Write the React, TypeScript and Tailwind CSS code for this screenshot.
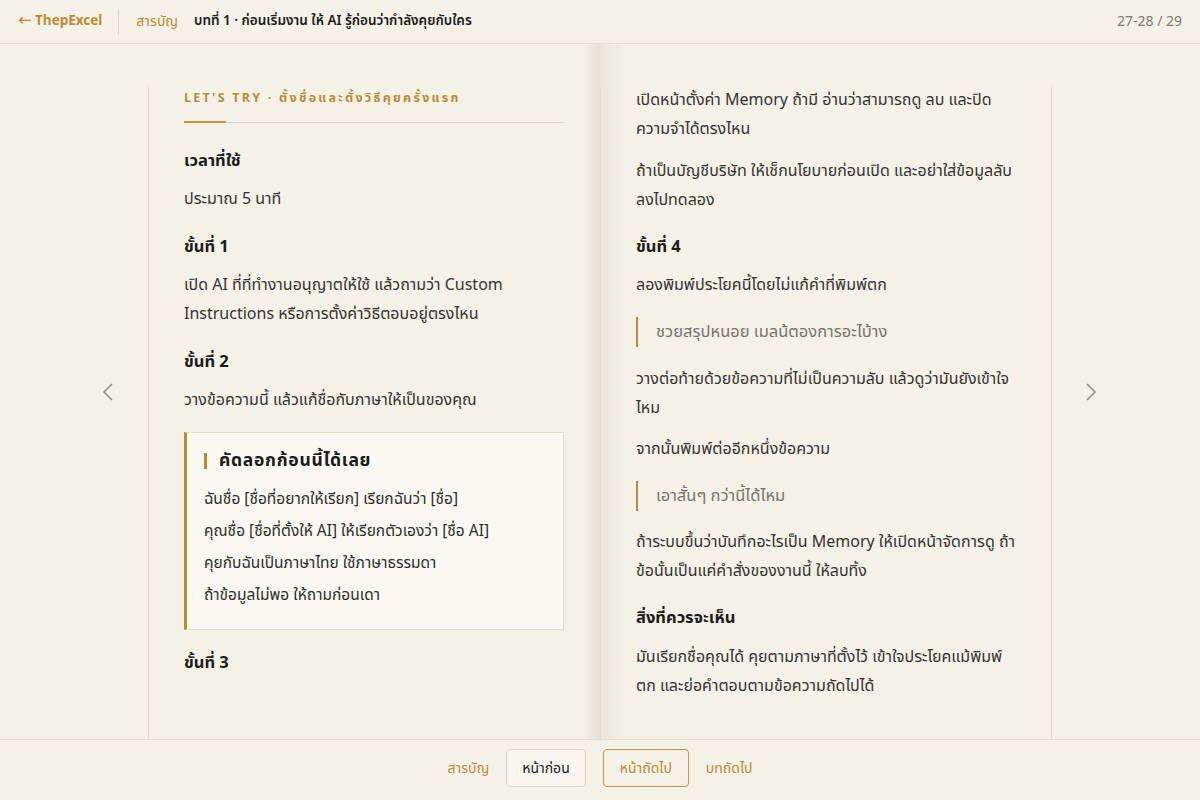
import React from "react";

const font = { fontFamily: '"Noto Sans Thai", "Noto Sans", "Noto Sans CJK SC", sans-serif' };

function Heading({ children, className = "" }: { children: React.ReactNode; className?: string }) {
  return <h3 className={`text-[16.5px] font-bold text-[#1c1b19] leading-[28px] ${className}`}>{children}</h3>;
}

function P({ children, className = "" }: { children: React.ReactNode; className?: string }) {
  return <p className={`text-[16px] text-[#35332f] leading-[29px] ${className}`}>{children}</p>;
}

function Quote({ children }: { children: React.ReactNode }) {
  return (
    <div className="border-l-2 border-[#b98b32] pl-[18px] text-[16.5px] leading-[30px] text-[#77736b]">{children}</div>
  );
}

export default function App() {
  return (
    <div style={font} className="w-[1200px] h-[800px] bg-[#f5f1e7] flex flex-col overflow-hidden">
      {/* Header */}
      <header className="h-[44px] shrink-0 border-b border-[#e4ddcc] flex items-center px-[18px]">
        <span className="text-[13.5px] font-bold text-[#b98b32]">← ThepExcel</span>
        <span className="ml-[16px] mr-[17px] w-px h-[26px] bg-[#e0d8c6]" />
        <span className="text-[14px] text-[#b98b32]">สารบัญ</span>
        <span className="ml-[16px] text-[13.5px] font-semibold text-[#1c1b19]">บทที่ 1 · ก่อนเริ่มงาน ให้ AI รู้ก่อนว่ากำลังคุยกับใคร</span>
        <span className="ml-auto text-[14px] text-[#7d7870]">27-28 / 29</span>
      </header>

      {/* Main */}
      <main className="relative flex-1 flex justify-center overflow-hidden">
        {/* spine shadow */}
        <div className="pointer-events-none absolute top-0 bottom-0 left-[582px] w-[18px] bg-gradient-to-r from-transparent to-[#e7e1d3]" />
        <div className="pointer-events-none absolute top-0 bottom-0 left-[600px] w-[26px] bg-gradient-to-r from-[#ebe6da] to-transparent" />

        <button className="absolute left-[100px] top-[337px] text-[#8f8a82]">
          <svg width="16" height="22" viewBox="0 0 16 22" fill="none" stroke="currentColor" strokeWidth="1.6">
            <path d="M12 3 L4 11 L12 19" />
          </svg>
        </button>
        <button className="absolute left-[1083px] top-[337px] text-[#8f8a82]">
          <svg width="16" height="22" viewBox="0 0 16 22" fill="none" stroke="currentColor" strokeWidth="1.6">
            <path d="M4 3 L12 11 L4 19" />
          </svg>
        </button>

        <div className="relative mt-[43px] flex w-[904px]">
          {/* Left page */}
          <section className="w-[452px] border-l border-[#e2dbc9] pl-[35px] pr-[36px]">
            <div className="relative border-b border-[#ddd5c3] pb-[12px]">
              <div className="text-[12.5px] font-bold tracking-[0.18em] text-[#b98b32] leading-[22px] pt-[1px]">
                LET'S TRY · ตั้งชื่อและตั้งวิธีคุยครั้งแรก
              </div>
              <div className="absolute left-0 bottom-[-1px] w-[42px] h-[2px] bg-[#c49539]" />
            </div>
            <Heading className="mt-[24px]">เวลาที่ใช้</Heading>
            <P className="mt-[10px]">ประมาณ 5 นาที</P>
            <Heading className="mt-[19px]">ขั้นที่ 1</Heading>
            <P className="mt-[10px]">เปิด AI ที่ที่ทำงานอนุญาตให้ใช้ แล้วถามว่า Custom Instructions หรือการตั้งค่าวิธีตอบอยู่ตรงไหน</P>
            <Heading className="mt-[19px]">ขั้นที่ 2</Heading>
            <P className="mt-[10px]">วางข้อความนี้ แล้วแก้ชื่อกับภาษาให้เป็นของคุณ</P>

            <div className="mt-[17px] bg-[#faf8f1] border border-[#e3dccb] border-l-[3px] border-l-[#b98b32] pl-[17px] pr-[16px] pt-[14px] pb-[17px]">
              <div className="flex items-center">
                <span className="w-[3px] h-[16px] bg-[#b98b32] mr-[12px]" />
                <span className="text-[17.5px] font-bold tracking-[0.04em] text-[#1c1b19] leading-[28px]">คัดลอกก้อนนี้ได้เลย</span>
              </div>
              <div className="mt-[9px] text-[15.5px] leading-[32px] text-[#2f2d29]">
                <div>ฉันชื่อ [ชื่อที่อยากให้เรียก] เรียกฉันว่า [ชื่อ]</div>
                <div>คุณชื่อ [ชื่อที่ตั้งให้ AI] ให้เรียกตัวเองว่า [ชื่อ AI]</div>
                <div>คุยกับฉันเป็นภาษาไทย ใช้ภาษาธรรมดา</div>
                <div>ถ้าข้อมูลไม่พอ ให้ถามก่อนเดา</div>
              </div>
            </div>
            <Heading className="mt-[19px]">ขั้นที่ 3</Heading>
          </section>

          {/* Right page */}
          <section className="w-[452px] border-l border-r border-[#e2dbc9] pl-[35px] pr-[36px]">
            <P className="-mt-[1px]">เปิดหน้าตั้งค่า Memory ถ้ามี อ่านว่าสามารถดู ลบ และปิดความจำได้ตรงไหน</P>
            <P className="mt-[13px]">ถ้าเป็นบัญชีบริษัท ให้เช็กนโยบายก่อนเปิด และอย่าใส่ข้อมูลลับลงไปทดลอง</P>
            <Heading className="mt-[18px]">ขั้นที่ 4</Heading>
            <P className="mt-[10px]">ลองพิมพ์ประโยคนี้โดยไม่แก้คำที่พิมพ์ตก</P>
            <div className="mt-[17px]"><Quote>ชวยสรุปหนอย เมลน้ตองการอะไบ้าง</Quote></div>
            <P className="mt-[18px]">วางต่อท้ายด้วยข้อความที่ไม่เป็นความลับ แล้วดูว่ามันยังเข้าใจไหม</P>
            <P className="mt-[12px]">จากนั้นพิมพ์ต่ออีกหนึ่งข้อความ</P>
            <div className="mt-[17px]"><Quote>เอาสั้นๆ กว่านี้ได้ไหม</Quote></div>
            <P className="mt-[17px] -mr-[12px]">
              <span className="whitespace-nowrap">ถ้าระบบขึ้นว่าบันทึกอะไรเป็น Memory ให้เปิดหน้าจัดการดู ถ้า</span>
              <br />
              ข้อนั้นเป็นแค่คำสั่งของงานนี้ ให้ลบทิ้ง
            </P>
            <Heading className="mt-[18px]">สิ่งที่ควรจะเห็น</Heading>
            <P className="mt-[11px]">มันเรียกชื่อคุณได้ คุยตามภาษาที่ตั้งไว้ เข้าใจประโยคแม้พิมพ์ตก และย่อคำตอบตามข้อความถัดไปได้</P>
          </section>
        </div>
      </main>

      {/* Footer */}
      <footer className="h-[61px] shrink-0 border-t border-[#e4ddcc] flex items-center justify-center gap-[17px] pb-[4px]">
        <span className="text-[14px] text-[#b98b32]">สารบัญ</span>
        <button className="h-[38px] px-[15px] rounded-[4px] border border-[#ddd6c7] bg-[#f8f5ee] text-[14px] text-[#1c1b19]">หน้าก่อน</button>
        <button className="h-[38px] px-[16px] rounded-[4px] border border-[#c49539] text-[14px] text-[#b98b32]">หน้าถัดไป</button>
        <span className="text-[14px] text-[#b98b32]">บทถัดไป</span>
      </footer>
    </div>
  );
}
